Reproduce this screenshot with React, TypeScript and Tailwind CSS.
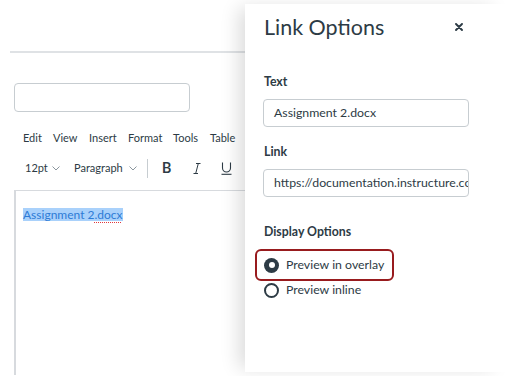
import React from "react";

function Chevron() {
  return (
    <svg width="8" height="5" viewBox="0 0 8 5">
      <path d="M0.5 0.5 L4 4 L7.5 0.5" fill="none" stroke="#8b969e" strokeWidth="1" />
    </svg>
  );
}

export default function App() {
  return (
    <div
      className="relative w-[506px] h-[376px] bg-white overflow-hidden text-[#2d3b45]"
      style={{ fontFamily: "Lato, 'Noto Sans', sans-serif" }}
    >
      {/* Left editor area */}
      <div className="flex flex-col w-[506px]">
        <div className="h-[51px]" />
        <div className="ml-[10px] h-[2px] bg-[#dfe2e5]" />
        <div className="mt-[30px] ml-[14px] w-[176px] h-[29px] border border-[#c7cdd1] rounded-[4px]" />
        <div className="mt-[19px] ml-[23px] flex items-center h-[14px] text-[11px] leading-[14px] text-[#2d3b45]">
          <span className="w-[30px]">Edit</span>
          <span className="w-[36px]">View</span>
          <span className="w-[39px]">Insert</span>
          <span className="w-[45px]">Format</span>
          <span className="w-[37px]">Tools</span>
          <span>Table</span>
        </div>
        <div className="mt-[13px] ml-[25px] flex items-center h-[20px] text-[11px]">
          <span className="w-[27px]">12pt</span>
          <span className="w-[22px] flex items-center"><Chevron /></span>
          <span className="w-[55px]">Paragraph</span>
          <span className="w-[18px] flex items-center"><Chevron /></span>
          <div className="w-[1px] h-[19px] bg-[#c7cdd1]" />
          <span className="ml-[14px] w-[11px] text-[15px] leading-[20px] font-medium" style={{ fontFamily: "Roboto, sans-serif" }}>B</span>
          <svg className="ml-[20px]" width="8" height="11" viewBox="0 0 8 11">
            <path d="M3 0.5 H7.5 M0.5 10.5 H5 M5.3 0.5 L2.7 10.5" fill="none" stroke="#2d3b45" strokeWidth="1" />
          </svg>
          <svg className="ml-[20px]" width="11" height="13" viewBox="0 0 11 13">
            <path d="M1.5 0.5 V6 a4 4 0 0 0 8 0 V0.5" fill="none" stroke="#2d3b45" strokeWidth="1.1" />
            <path d="M0.5 12.3 H10.5" stroke="#2d3b45" strokeWidth="1.1" />
          </svg>
        </div>
        <div className="mt-[12px] ml-[14px] h-[185px] border-l-2 border-t border-[#d7dade] pt-[17px] pl-[7px]">
          <div className="flex">
            <span className="bg-[#a9d1fb] text-[#2d7bd6] text-[12px] leading-[13px] h-[13px] whitespace-nowrap">
              Assignment 2
              <span className="underline decoration-dotted decoration-[#e0393e] underline-offset-[3px]">.docx</span>
            </span>
          </div>
        </div>
        <div className="mt-[1px] ml-[7px] w-[493px] h-[2px] bg-[#e5e7ea]" />
      </div>

      {/* Link options tray */}
      <div
        className="absolute top-[4px] left-[245px] w-[261px] h-[368px] bg-white flex flex-col"
        style={{ boxShadow: "-10px 0 18px -4px rgba(0,0,0,0.14)" }}
      >
        <div className="mt-[9px] flex items-center h-[28px] pl-[19px] pr-[43px] justify-between">
          <span className="text-[21.5px] leading-[28px] font-normal">Link Options</span>
          <svg width="8" height="8" viewBox="0 0 8 8">
            <path d="M1 1 L7 7 M7 1 L1 7" stroke="#2d3b45" strokeWidth="1.9" strokeLinecap="round" />
          </svg>
        </div>
        <div className="mt-[33px] pl-[19px] text-[12.3px] font-bold leading-[16px]">Text</div>
        <div className="mt-[9px] ml-[18px] w-[206px] h-[28px] border border-[#c7cdd1] rounded-[4px] flex items-center pl-[10px] text-[12.3px]">
          Assignment 2.docx
        </div>
        <div className="mt-[17px] pl-[19px] text-[12.3px] font-bold leading-[16px]">Link</div>
        <div className="mt-[9px] ml-[18px] w-[206px] h-[28px] border border-[#c7cdd1] rounded-[4px] flex items-center pl-[10px] text-[12.3px] overflow-hidden whitespace-nowrap">
          https://documentation.instructure.com
        </div>
        <div className="mt-[27px] pl-[19px] text-[12.3px] font-bold leading-[16px]">Display Options</div>
        <div className="mt-[9px] ml-[10px] w-[139px] h-[32px] border-2 border-[#981b1e] rounded-[6px] flex items-center pl-[7px]">
          <div className="w-[15px] h-[15px] rounded-full bg-[#2d3b45] flex items-center justify-center">
            <div className="w-[6px] h-[6px] rounded-full bg-white" />
          </div>
          <span className="ml-[7px] text-[12.3px] whitespace-nowrap">Preview in overlay</span>
        </div>
        <div className="mt-[2px] ml-[19px] flex items-center h-[15px]">
          <div className="w-[15px] h-[15px] rounded-full border-2 border-[#2d3b45]" />
          <span className="ml-[7px] text-[12.3px]">Preview inline</span>
        </div>
      </div>
    </div>
  );
}
